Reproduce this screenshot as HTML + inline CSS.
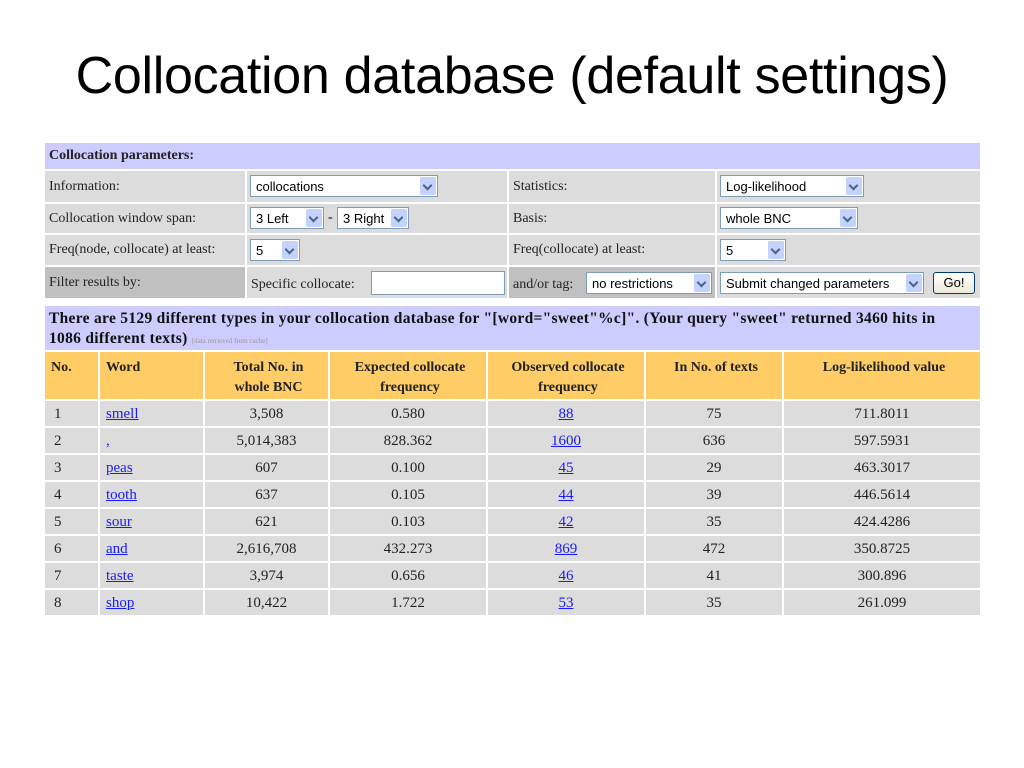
<!DOCTYPE html>
<html><head><meta charset="utf-8"><style>
body{margin:0;width:1024px;height:768px;background:#fff;position:relative;overflow:hidden;font-family:"Liberation Serif",serif;}
.t{position:absolute;left:0;width:1024px;top:46px;text-align:center;font-family:"Liberation Sans",sans-serif;font-size:52px;letter-spacing:-0.3px;color:#000;}
.c{position:absolute;box-sizing:border-box;font-size:14px;color:#222;padding-left:4px;line-height:1;display:flex;align-items:center;white-space:nowrap;overflow:hidden}
.g{background:#dcdcdc}.d{background:#c0c0c0}.l{background:#ccccff}.o{background:#ffcc66;font-weight:bold;align-items:flex-start;padding-top:6px;justify-content:center;text-align:center;line-height:20px}
.s{position:absolute;box-sizing:border-box;background:#fff;border:1px solid #7f9db9;font-family:"Liberation Sans",sans-serif;font-size:13px;color:#000;padding:3px 0 0 5px;height:22px}
.s i{position:absolute;right:1px;top:1px;width:16px;height:18px;background:#c3d3fd;border-radius:2px}
.s i:after{content:"";position:absolute;left:4px;top:5px;width:5px;height:5px;border-right:2px solid #4d6185;border-bottom:2px solid #4d6185;transform:rotate(45deg)}
.n{justify-content:center;padding:0;font-size:15px}
a{color:#1a1aff;text-decoration:underline}
</style></head><body>
<div class="t">Collocation database (default settings)</div>

<div class="c l" style="left:45px;top:143px;width:935px;height:26px;font-weight:bold">Collocation parameters:</div>

<div class="c g" style="left:45px;top:171px;width:200px;height:31px">Information:</div>
<div class="c g" style="left:247px;top:171px;width:260px;height:31px"></div>
<div class="c g" style="left:509px;top:171px;width:206px;height:31px">Statistics:</div>
<div class="c g" style="left:717px;top:171px;width:263px;height:31px"></div>

<div class="c g" style="left:45px;top:204px;width:200px;height:29px">Collocation window span:</div>
<div class="c g" style="left:247px;top:204px;width:260px;height:29px"></div>
<div class="c g" style="left:509px;top:204px;width:206px;height:29px">Basis:</div>
<div class="c g" style="left:717px;top:204px;width:263px;height:29px"></div>

<div class="c g" style="left:45px;top:235px;width:200px;height:30px">Freq(node, collocate) at least:</div>
<div class="c g" style="left:247px;top:235px;width:260px;height:30px"></div>
<div class="c g" style="left:509px;top:235px;width:206px;height:30px">Freq(collocate) at least:</div>
<div class="c g" style="left:717px;top:235px;width:263px;height:30px"></div>

<div class="c d" style="left:45px;top:267px;width:200px;height:31px">Filter results by:</div>
<div class="c g" style="left:247px;top:267px;width:260px;height:31px;padding-top:4px">Specific collocate:</div>
<div class="c d" style="left:509px;top:267px;width:206px;height:31px;padding-top:4px">and/or tag:</div>
<div class="c g" style="left:717px;top:267px;width:263px;height:31px"></div>

<div class="s" style="left:250px;top:175px;width:188px">collocations<i></i></div>
<div class="s" style="left:720px;top:175px;width:144px">Log-likelihood<i></i></div>
<div class="s" style="left:250px;top:207px;width:74px">3 Left<i></i></div>
<div style="position:absolute;left:328px;top:210px;font-size:14px">-</div>
<div class="s" style="left:337px;top:207px;width:72px">3 Right<i></i></div>
<div class="s" style="left:720px;top:207px;width:138px">whole BNC<i></i></div>
<div class="s" style="left:250px;top:239px;width:50px">5<i></i></div>
<div class="s" style="left:720px;top:239px;width:66px">5<i></i></div>
<div class="s" style="left:371px;top:271px;width:134px;height:24px"></div>
<div class="s" style="left:586px;top:272px;width:126px">no restrictions<i></i></div>
<div class="s" style="left:720px;top:272px;width:204px">Submit changed parameters<i></i></div>
<div style="position:absolute;left:933px;top:272px;width:42px;height:22px;box-sizing:border-box;border:1px solid #003c74;border-radius:3px;background:linear-gradient(#fff,#ece9d8);font:13px 'Liberation Sans',sans-serif;text-align:center;line-height:20px">Go!</div>

<div class="c l" style="left:45px;top:306px;width:935px;height:44px;font-weight:bold;font-size:15.5px;letter-spacing:0.3px;color:#111;white-space:normal;line-height:20px;padding-top:3px;padding-right:10px;display:block">There are 5129 different types in your collocation database for "[word="sweet"%c]". (Your query "sweet" returned 3460 hits in 1086 different texts) <span style="font-weight:normal;font-size:7px;letter-spacing:0;color:#999;white-space:nowrap">[data retrieved from cache]</span></div>

<div class="c o" style="left:45px;top:352px;width:53px;height:47px;justify-content:flex-start;padding-left:6px">No.</div>
<div class="c o" style="left:100px;top:352px;width:103px;height:47px;justify-content:flex-start;padding-left:6px">Word</div>
<div class="c o" style="left:205px;top:352px;width:123px;height:47px;white-space:normal">Total No. in<br>whole BNC</div>
<div class="c o" style="left:330px;top:352px;width:156px;height:47px">Expected collocate<br>frequency</div>
<div class="c o" style="left:488px;top:352px;width:156px;height:47px">Observed collocate<br>frequency</div>
<div class="c o" style="left:646px;top:352px;width:136px;height:47px">In No. of texts</div>
<div class="c o" style="left:784px;top:352px;width:196px;height:47px">Log-likelihood value</div>

<div id="rows"></div>
<script>
var d=[["1","smell","3,508","0.580","88","75","711.8011"],["2",",","5,014,383","828.362","1600","636","597.5931"],["3","peas","607","0.100","45","29","463.3017"],["4","tooth","637","0.105","44","39","446.5614"],["5","sour","621","0.103","42","35","424.4286"],["6","and","2,616,708","432.273","869","472","350.8725"],["7","taste","3,974","0.656","46","41","300.896"],["8","shop","10,422","1.722","53","35","261.099"]];
var cols=[[45,53],[100,103],[205,123],[330,156],[488,156],[646,136],[784,196]];
var h="";
d.forEach(function(r,i){var y=401+i*27;
cols.forEach(function(c,j){var v=r[j];
if(j==1||j==4)v='<a>'+v+'</a>';
var cls=j==0?'c g':(j==1?'c g':'c g n');
var st=j==0?'padding-left:9px;font-size:15px':(j==1?'padding-left:6px;font-size:15px':'');
h+='<div class="'+cls+'" style="left:'+c[0]+'px;top:'+y+'px;width:'+c[1]+'px;height:25px;padding-top:2px;'+st+'">'+v+'</div>';});});
document.getElementById('rows').innerHTML=h;
</script>
</body></html>
